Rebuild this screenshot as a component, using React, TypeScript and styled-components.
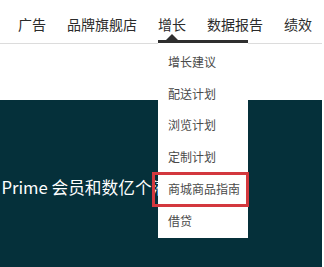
import React from "react";
import styled, { createGlobalStyle } from "styled-components";

const Global = createGlobalStyle`
  html, body { margin: 0; padding: 0; background: #ffffff; }
  body { font-family: "Noto Sans CJK SC", "Noto Sans", sans-serif; }
  * { box-sizing: border-box; }
`;

const Page = styled.div`
  width: 322px;
  height: 267px;
  overflow: hidden;
  display: flex;
  flex-direction: column;
  background: #ffffff;
`;

const Nav = styled.nav`
  height: 44px;
  padding: 5px 0 0 18px;
  border-bottom: 1px solid #dcdcdc;
  display: flex;
  align-items: center;
  gap: 21px;
  position: relative;
  z-index: 2;
  flex-shrink: 0;
`;

const NavItem = styled.div`
  position: relative;
  font-size: 14px;
  line-height: 20px;
  color: #2b2b2b;
  white-space: nowrap;
`;

const Dropdown = styled.div`
  position: absolute;
  left: 0;
  top: calc(100% + 6px);
  width: 90px;
  background: #ffffff;
  border-top: 3px solid #2f2f2f;
  padding: 3px 0 1px;
  display: flex;
  flex-direction: column;
  &::before {
    content: "";
    position: absolute;
    left: 8px;
    top: -9px;
    border-left: 6px solid transparent;
    border-right: 6px solid transparent;
    border-bottom: 6px solid #2f2f2f;
  }
`;

const MenuItem = styled.div<{ $marked?: boolean }>`
  position: relative;
  height: 31.8px;
  display: flex;
  align-items: center;
  padding-left: 10px;
  font-size: 12px;
  color: #4a4a4a;
  white-space: nowrap;
  &::after {
    content: "";
    display: ${(p) => (p.$marked ? "block" : "none")};
    position: absolute;
    left: -6px;
    right: -1px;
    top: -1px;
    bottom: -2px;
    border: 3px solid #d3383e;
  }
`;

const Spacer = styled.div`
  height: 56px;
  flex-shrink: 0;
`;

const Hero = styled.section`
  flex: 1;
  background: #05303a;
  padding-top: 75px;
  overflow: hidden;
`;

const HeroText = styled.div`
  margin-left: -19px;
  font-size: 16.7px;
  line-height: 24px;
  font-weight: 400;
  color: #ffffff;
  white-space: nowrap;
`;

const navItems = ["广告", "品牌旗舰店", "增长", "数据报告", "绩效"];
const menu = ["增长建议", "配送计划", "浏览计划", "定制计划", "商城商品指南", "借贷"];

export default function App() {
  return (
    <>
      <Global />
      <Page>
        <Nav>
          {navItems.map((n) => (
            <NavItem key={n}>
              {n}
              {n === "增长" && (
                <Dropdown>
                  {menu.map((m) => (
                    <MenuItem key={m} $marked={m === "商城商品指南"}>
                      {m}
                    </MenuItem>
                  ))}
                </Dropdown>
              )}
            </NavItem>
          ))}
        </Nav>
        <Spacer />
        <Hero>
          <HeroText>达 Prime 会员和数亿个潜在买家</HeroText>
        </Hero>
      </Page>
    </>
  );
}
